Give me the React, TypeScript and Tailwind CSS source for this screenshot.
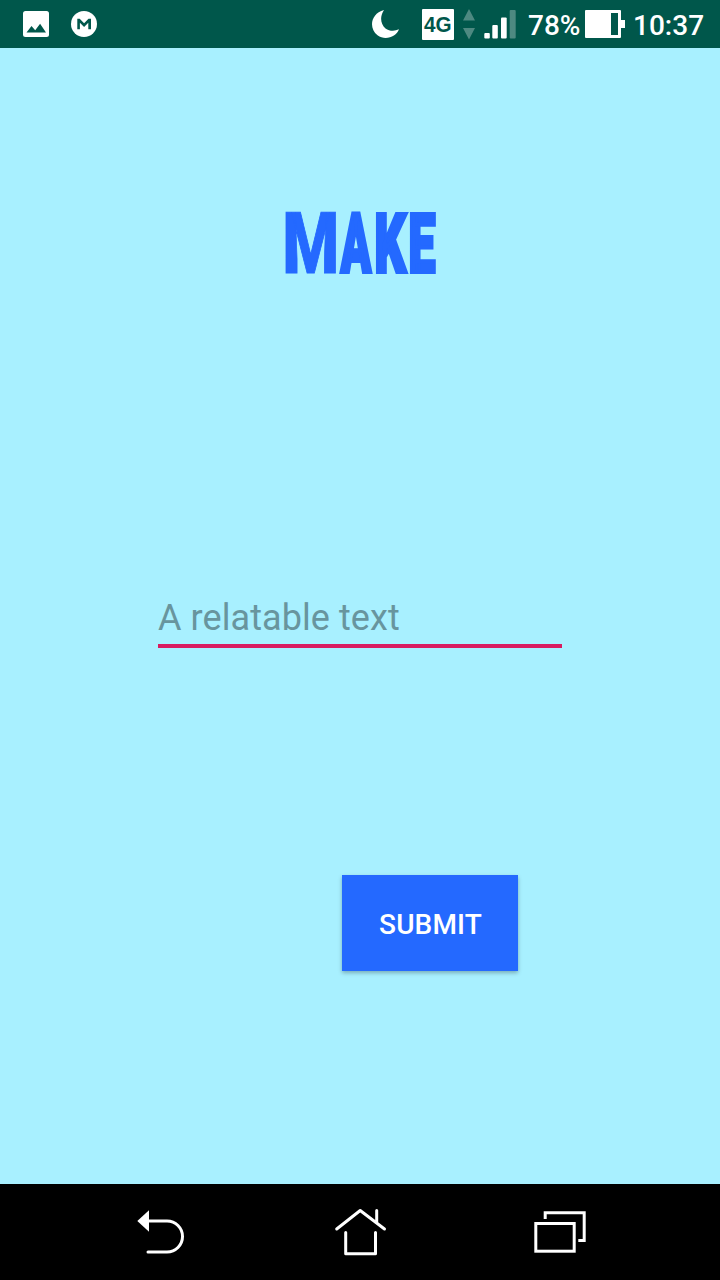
function StatusBar() {
  return (
    <header className="flex h-12 shrink-0 items-center bg-[#00574b] text-[28px] leading-none font-medium text-white">
      <svg className="ml-[23px] h-[26px] w-[26px]" viewBox="0 0 26 26">
        <rect width="26" height="26" y="0" rx="2.5" fill="#fff" />
        <path d="M3.500 21.500 8.500 15l3.700 4.200 4.900-6.500 5.900 8.800z" fill="#00574b" />
      </svg>
      <svg className="ml-[22px] h-[26px] w-[26px]" viewBox="0 0 26 26">
        <circle cx="13" cy="13" r="13" fill="#fff" />
        <path d="M6.300 7.700h2.400l4.400 4.500 4.400-4.500H20v10.600h-2.700v-6.500l-4.200 4.200-4.200-4.200v6.500H6.300z" fill="#00574b" />
      </svg>
      <svg className="ml-[274px] h-[30px] w-7" viewBox="0 0 28 30">
        <path d="M13 1C8.500 7.500 9.500 15.500 14.500 19.400 18.500 22.200 23.500 22.500 28 20.300 25.500 27.500 14.500 32 6.500 26.300-2.500 19.500-.5 4.500 13 1z" fill="#fff" />
      </svg>
      <div className="ml-[23px] flex h-[31px] w-8 items-center justify-center rounded-[1px] bg-white font-['Liberation_Sans',sans-serif] text-[22px] font-bold text-[#00574b]">
        <span className="shrink-0 scale-x-[0.94] pt-[2px]">4G</span>
      </div>
      <svg className="ml-[9px] h-8 w-3" viewBox="0 0 12 32" fill="#4d8981">
        <path d="M6 1 12 12.500H0zM0 20h12L6 31.500z" />
      </svg>
      <svg className="ml-[9px] h-8 w-8" viewBox="0 0 32 32" fill="#fff">
        <rect x="0.300" y="25" width="5.500" height="5.500" rx="1" />
        <rect x="8.300" y="17" width="5.500" height="13.500" rx="1" />
        <rect x="17" y="9.500" width="5.700" height="21" rx="1" />
        <rect x="25.700" y="2" width="6" height="28.500" rx="1" fill="#4d8981" />
      </svg>
      <span className="ml-3 w-[57px] pt-[3px]">78%</span>
      <svg className="h-7 w-10" viewBox="0 0 40 28">
        <path fill="#fff" fillRule="evenodd" d="M1 0h34q1 0 1 1v9h4v8h-4v9q0 1-1 1H1q-1 0-1-1V1q0-1 1-1zM26 3v22h7V3z" />
      </svg>
      <span className="ml-2 pt-[3px]">10:37</span>
    </header>
  );
}

function Title() {
  return (
    <h1 aria-label="MAKE" className="mt-[152px] ml-[286px] flex h-[88px] self-start text-[82px] leading-[88px] font-black text-[#2469ff] [-webkit-text-stroke:4px_#2469ff]">
      <span className="flex w-[49px] justify-center">
        <span className="shrink-0 scale-x-[0.75] text-[86px] [-webkit-text-stroke:1px_#2469ff]">M</span>
      </span>
      <span className="ml-1 flex w-[33px] justify-center">
        <span className="shrink-0 scale-x-[0.543]">A</span>
      </span>
      <span className="ml-[2px] flex w-8 justify-center">
        <span className="shrink-0 scale-x-[0.6]">K</span>
      </span>
      <span className="ml-[3px] flex w-[26px] justify-center">
        <span className="shrink-0 scale-x-[0.586]">E</span>
      </span>
    </h1>
  );
}

function NavigationBar() {
  return (
    <nav className="flex h-24 shrink-0 items-center bg-black">
      <button aria-label="Back" className="ml-[137px]">
        <svg className="block h-12 w-12" viewBox="0 0 48 48" fill="none" stroke="#fff" strokeWidth="3" strokeLinecap="round">
          <path d="M11 13h19a15.500 15.500 0 0 1 0 31H11" />
          <path d="M12 2.300v21.500L.3 13z" fill="#fff" stroke="none" />
        </svg>
      </button>
      <button aria-label="Home" className="ml-[150px]">
        <svg className="block h-12 w-[50px] overflow-visible" viewBox="0 0 50 48" fill="none" stroke="#fff" strokeWidth="3" strokeLinecap="round" strokeLinejoin="round">
          <path d="M1.700 21 25.200 2.500 49.500 21M41.700 2.500V14M10.700 24.500v21.200h29.800V24.500" />
        </svg>
      </button>
      <button aria-label="Recent apps" className="ml-[149px]">
        <svg className="block h-12 w-[52px]" viewBox="0 0 52 48" fill="none" stroke="#fff" strokeWidth="3">
          <rect x="1.800" y="15.500" width="38.400" height="27.700" />
          <path d="M11.200 11V4.800h39v27.700h-5.900" />
        </svg>
      </button>
    </nav>
  );
}

export default function App() {
  return (
    <div className="flex h-[1280px] w-[720px] flex-col overflow-hidden bg-[#a8f0ff] font-['Roboto',sans-serif]">
      <StatusBar />
      <main className="flex flex-1 flex-col">
        <Title />
        <input
          aria-label="A relatable text"
          placeholder="A relatable text"
          className="mt-[300px] ml-[158px] h-[60px] w-[404px] border-b-4 border-[#d81b60] bg-transparent pt-1 text-[36px] tracking-[0.08px] text-[#222] outline-none placeholder:text-[#68959e]"
        />
        <button className="mt-[227px] ml-[342px] h-24 w-44 bg-[#2469ff] pt-[4px] pl-[1px] text-[28px] font-medium tracking-[0.15px] text-white shadow-[0_2px_4px_rgba(0,0,0,0.28)]">
          SUBMIT
        </button>
      </main>
      <NavigationBar />
    </div>
  );
}
